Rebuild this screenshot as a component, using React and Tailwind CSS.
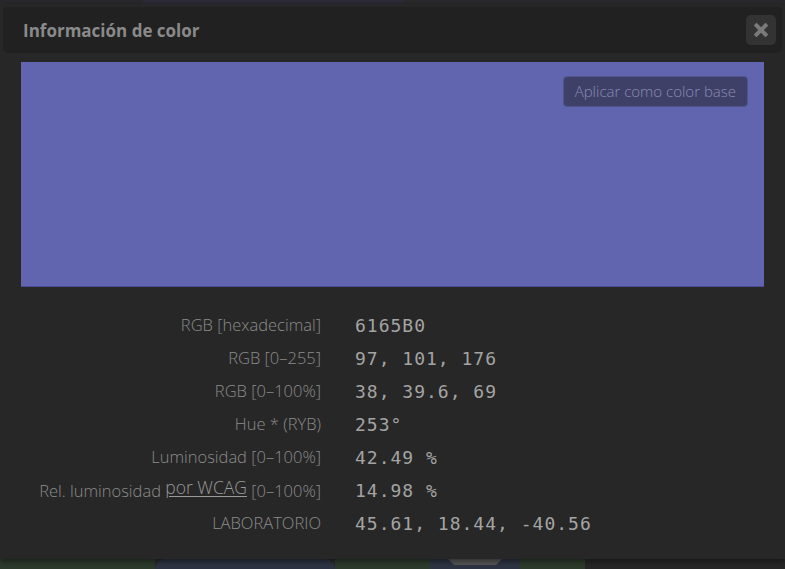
import React from 'react';

const rows = [
  { label: 'RGB [hexadecimal]', value: '6165B0' },
  { label: 'RGB [0–255]', value: '97, 101, 176' },
  { label: 'RGB [0–100%]', value: '38, 39.6, 69' },
  { label: 'Hue * (RYB)', value: '253°' },
  { label: 'Luminosidad [0–100%]', value: '42.49 %' },
  { label: 'wcag', value: '14.98 %' },
  { label: 'LABORATORIO', value: '45.61, 18.44, -40.56' },
];

const sans = { fontFamily: '"Open Sans", "Noto Sans", sans-serif' };
const mono = { fontFamily: '"DejaVu Sans Mono", "Liberation Mono", monospace' };

const Backdrop = () => (
  <div className="flex h-[10px] w-full">
    <div className="w-[155px] bg-[#2c3b2b]" />
    <div className="w-[180px] rounded-t-[14px] bg-[#2d3342]" />
    <div className="w-[95px] bg-[#2c3b2b]" />
    <div className="flex w-[90px] justify-center bg-[#2d3342]">
      <div className="h-[6px] w-[54px] border-x-[6px] border-t-[6px] border-x-transparent border-t-[#555]" />
    </div>
    <div className="w-[65px] bg-[#2c3b2b]" />
    <div className="flex-1 bg-[#262626]" />
  </div>
);

export default function App() {
  return (
    <div className="flex h-[569px] w-[785px] flex-col overflow-hidden bg-[#2a2a2a]" style={sans}>
      <div className="flex h-[4px] w-full">
        <div className="w-[143px] bg-[#29292b]" />
        <div className="w-[260px] bg-[#2c2a36]" />
        <div className="flex-1 bg-[#2a2a2c]" />
      </div>
      <div className="relative z-10 flex h-[555px] flex-col bg-[#272727] p-[3px] shadow-[0_2px_6px_rgba(0,0,0,0.5)]">
        <div className="flex h-[46px] items-center justify-between rounded-[5px] bg-[#212121] pl-[20px] pr-[6px]">
          <span className="mt-[1px] text-[17px] font-bold text-[#8a8a8a]">Información de color</span>
          <button className="flex h-[30px] w-[30px] items-center justify-center rounded-[5px] bg-[#333333]">
            <svg width="14" height="14" viewBox="0 0 14 14">
              <path d="M2.5 2.5 L11.5 11.5 M11.5 2.5 L2.5 11.5" stroke="#7a7a7a" strokeWidth="4" strokeLinecap="square" />
            </svg>
          </button>
        </div>
        <div className="mx-[18px] mt-[9px] flex h-[225px] justify-end border-b border-[#4a4d95] bg-[#6165b0] pr-[16px] pt-[14px]">
          <button className="h-[31px] rounded-[4px] border border-[#52548f] bg-[#3f4068] px-[11px] text-[15px] font-light text-[#8a8bb4]">
            Aplicar como color base
          </button>
        </div>
        <div className="mt-[24px] flex flex-col gap-[5px]">
          {rows.map((r) => (
            <div key={r.label} className="flex h-[28px] items-center">
              <div className="w-[318px] whitespace-nowrap text-right text-[16.5px] font-light text-[#8c8c8c]">
                {r.label === 'wcag' ? (
                  <>
                    Rel. luminosidad{' '}
                    <span className="relative top-[-3px] text-[17.5px] text-[#9a9a9a] underline underline-offset-2">por WCAG</span>{' '}
                    [0–100%]
                  </>
                ) : (
                  r.label
                )}
              </div>
              <div className="ml-[34px] text-[18px] font-normal tracking-[1px] text-[#a4a4a4]" style={mono}>
                {r.value}
              </div>
            </div>
          ))}
        </div>
      </div>
      <Backdrop />
    </div>
  );
}
